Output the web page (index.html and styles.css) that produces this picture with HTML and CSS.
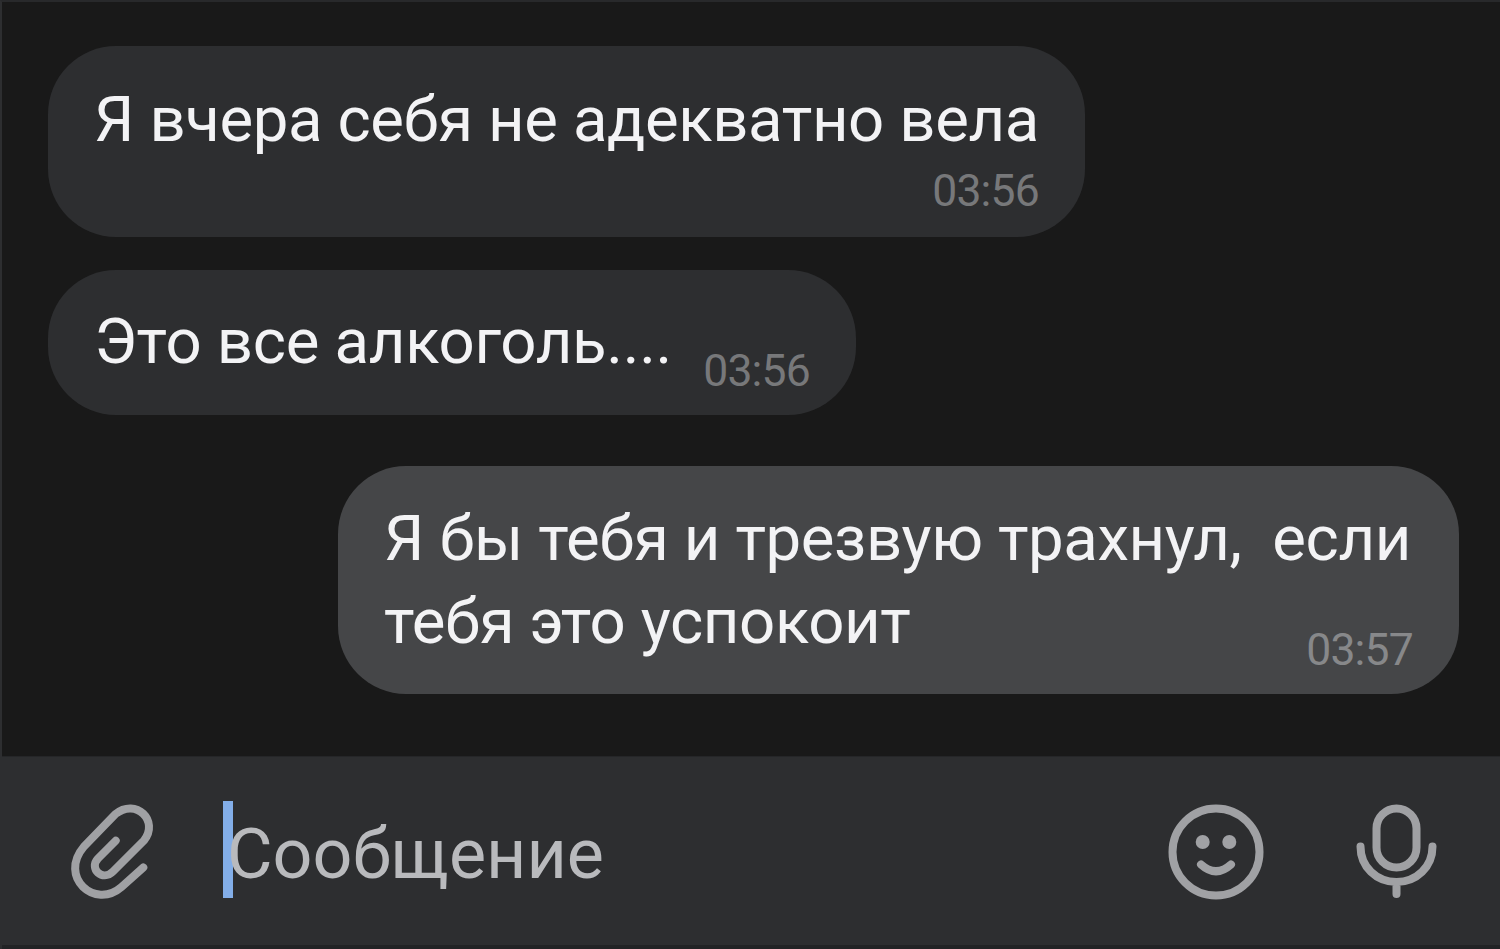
FILE: index.html
```html
<!DOCTYPE html>
<html lang="ru">
<head>
  <meta charset="UTF-8">
  <title>Чат</title>
  <meta name="viewport" content="width=device-width, initial-scale=1.0"/>
  <link rel="stylesheet" href="styles.css">
</head>
<body>
  <div class="chat">
    <div class="messages">
      <div class="bubble first">
        <p class="text">Я вчера себя не адекватно вела</p>
        <span class="time">03:56</span>
      </div>

      <div class="bubble second">
        <p class="text">Это все алкоголь....</p>
        <span class="time">03:56</span>
      </div>

      <div class="bubble own">
        <p class="text">Я бы тебя и трезвую трахнул,  если</p>
        <div class="last-line">
          <p class="text">тебя это успокоит</p>
          <span class="time">03:57</span>
        </div>
      </div>
    </div>

    <div class="composer">
      <svg class="icon clip" viewBox="0 0 88 100" width="88" height="100">
        <path d="M47.700 38.700L30 56.500C20.500 66.500 34.500 80 45 69.500L76 38.500C91.500 19 68 -4.500 47.500 12L16 44.500C-10 75 27 108 53.500 85L75.300 65.500"/>
      </svg>

      <div class="field">
        <span class="caret"></span>
        <span class="placeholder">Сообщение</span>
      </div>

      <svg class="icon smile" viewBox="0 0 100 100" width="100" height="100">
        <circle cx="50" cy="50" r="43.500"/>
        <circle class="dot" cx="36.700" cy="40" r="7"/>
        <circle class="dot" cx="63.300" cy="40" r="7"/>
        <path d="M35 62.500Q50 76 65 62.500"/>
      </svg>

      <svg class="icon mic" viewBox="0 0 84 100" width="84" height="100">
        <rect x="22.500" y="6.500" width="40" height="59" rx="20"/>
        <path d="M6.500 44.500C6.500 65 22.500 80 42.500 80C62.500 80 78.500 65 78.500 44.500M42.500 80V92"/>
      </svg>
    </div>
  </div>
</body>
</html>
```
FILE: styles.css
```css
* {
  box-sizing: border-box;
}

body {
  margin: 0;
  background: #191919;
  font-family: Roboto, sans-serif;
}

.chat {
  display: flex;
  flex-direction: column;
  height: 949px;
  border-top: 2px solid #28292b;
  border-left: 2px solid #2d2e30;
  overflow: hidden;
}

.messages {
  display: flex;
  flex-direction: column;
  align-items: flex-start;
  height: 754px;
  padding: 44px 41px 0 46px;
}

.bubble {
  display: flex;
  justify-content: space-between;
  padding: 30px 46px 21px 46px;
  border-radius: 68px;
  background: #2d2e30;
}

.first {
  flex-direction: column;
  width: 1037px;
  height: 191px;
  padding-top: 32px;
  padding-bottom: 23px;
  margin-bottom: 33px;
}

.second {
  width: 808px;
  height: 145px;
  margin-bottom: 51px;
}

.own {
  flex-direction: column;
  align-self: flex-end;
  width: 1121px;
  height: 228px;
  padding-top: 31px;
  background: #454648;
}

.last-line {
  display: flex;
  flex: 1;
  justify-content: space-between;
}

.text {
  margin: 0;
  color: #f3f3f5;
  font-size: 63.5px;
  letter-spacing: -0.4px;
  line-height: 83px;
  white-space: pre;
}

.second .text {
  letter-spacing: -0.3px;
}

.time {
  align-self: flex-end;
  color: #77787a;
  font-size: 44.5px;
  letter-spacing: -0.8px;
  line-height: 46px;
}

.own .time {
  color: #87888a;
}

.composer {
  display: flex;
  align-items: center;
  height: 193px;
  padding: 5px 62px 3px 66px;
  background: #2d2e30;
  border-bottom: 4px solid #222325;
  border-top: 1px solid #252628;
}

.icon {
  flex-shrink: 0;
  fill: none;
  stroke: #a0a1a4;
  stroke-width: 8;
  stroke-linecap: round;
  stroke-linejoin: round;
}

.dot {
  fill: #a0a1a4;
  stroke: none;
}

.field {
  display: flex;
  align-items: center;
  flex: 1;
  margin-left: 67px;
}

.caret {
  width: 10px;
  height: 97px;
  margin: -5px -6px 0 0;
  background: #83aee8;
}

.placeholder {
  padding-top: 3px;
  color: #b9babd;
  font-size: 70px;
  line-height: 82px;
}

.mic {
  margin-left: 88px;
}
```
